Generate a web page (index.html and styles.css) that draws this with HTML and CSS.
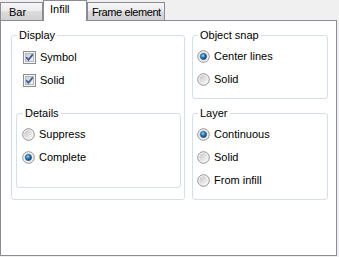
FILE: index.html
```html
<!DOCTYPE html>
<html lang="en">
<head>
    <meta charset="UTF-8">
    <meta name="viewport" content="width=device-width, initial-scale=1.0">
    <title>Infill</title>
    <link rel="stylesheet" href="styles.css">
</head>
<body>
    <!-- shared drawings for the check boxes and radio buttons -->
    <svg class="defs" width="0" height="0">
        <defs>
            <linearGradient id="boxFill" x1="0" y1="0" x2="1" y2="1">
                <stop offset="0" stop-color="#c9ccd2"/>
                <stop offset="1" stop-color="#f6f6f6"/>
            </linearGradient>
            <linearGradient id="radioFill" x1="0" y1="0" x2="1" y2="1">
                <stop offset="0" stop-color="#c6c6c6"/>
                <stop offset="1" stop-color="#fafafa"/>
            </linearGradient>
            <radialGradient id="dotFill" cx="0.4" cy="0.35" r="0.7">
                <stop offset="0" stop-color="#9fdcf8"/>
                <stop offset="0.5" stop-color="#1e76bb"/>
                <stop offset="1" stop-color="#0b3c6c"/>
            </radialGradient>
            <symbol id="checkbox" viewBox="0 0 13 13">
                <rect x="0.5" y="0.5" width="12" height="12" fill="#f4f4f4" stroke="#8e8f8f"/>
                <rect x="2.5" y="2.5" width="8" height="8" fill="url(#boxFill)" stroke="#b4b9bf"/>
                <path d="M3.2 6.3 L5.4 8.9 L9.8 3.4" fill="none" stroke="#42599a" stroke-width="1.7"/>
            </symbol>
            <symbol id="radio-off" viewBox="0 0 13 13">
                <circle cx="6.5" cy="6.5" r="5.8" fill="#f4f4f4" stroke="#939393"/>
                <circle cx="6.5" cy="6.5" r="4.2" fill="url(#radioFill)"/>
            </symbol>
            <symbol id="radio-on" viewBox="0 0 13 13">
                <circle cx="6.5" cy="6.5" r="5.8" fill="#f4f4f4" stroke="#939393"/>
                <circle cx="6.5" cy="6.5" r="4.2" fill="url(#radioFill)"/>
                <circle cx="6.5" cy="6.5" r="3.1" fill="url(#dotFill)" stroke="#24496f" stroke-width="0.6"/>
            </symbol>
        </defs>
    </svg>

    <div class="tabs">
        <div class="tab tab-bar">Bar</div>
        <div class="tab tab-infill selected">Infill</div>
        <div class="tab tab-frame">Frame element</div>
    </div>

    <div class="pane">
        <div class="column">
            <fieldset class="group display">
                <legend>Display</legend>
                <label class="option indent"><svg class="mark"><use href="#checkbox"/></svg>Symbol</label>
                <label class="option indent"><svg class="mark"><use href="#checkbox"/></svg>Solid</label>

                <fieldset class="group details">
                    <legend>Details</legend>
                    <label class="option"><svg class="mark"><use href="#radio-off"/></svg>Suppress</label>
                    <label class="option"><svg class="mark"><use href="#radio-on"/></svg>Complete</label>
                </fieldset>
            </fieldset>
        </div>

        <div class="column">
            <fieldset class="group snap">
                <legend>Object snap</legend>
                <label class="option"><svg class="mark"><use href="#radio-on"/></svg>Center lines</label>
                <label class="option"><svg class="mark"><use href="#radio-off"/></svg>Solid</label>
            </fieldset>

            <fieldset class="group layer">
                <legend>Layer</legend>
                <label class="option"><svg class="mark"><use href="#radio-on"/></svg>Continuous</label>
                <label class="option"><svg class="mark"><use href="#radio-off"/></svg>Solid</label>
                <label class="option"><svg class="mark"><use href="#radio-off"/></svg>From infill</label>
            </fieldset>
        </div>
    </div>
</body>
</html>
```

FILE: styles.css
```css
* {
    font-family: "Liberation Sans", Arial, sans-serif;
    box-sizing: border-box;
}

body {
    margin: 0;
    background-color: #f0f0f0;
    font-size: 11px;
    line-height: 13px;
    color: #000;
}

.defs {
    display: block;
    height: 0;
}

/* tab strip */
.tabs {
    display: flex;
    align-items: flex-end;
    height: 20px;
}

.tab {
    height: 18px;
    padding-top: 3px;
    border: 1px solid #898c95;
    border-bottom: none;
    background: linear-gradient(#f6f6f6, #ebebeb 50%, #dcdcdc 50%, #d0d0d0);
    white-space: nowrap;
    overflow: hidden;
}

.tab-bar {
    width: 43px;
    padding-left: 8px;
}

.tab-infill {
    width: 44px;
    padding-left: 6px;
}

.tab-frame {
    width: 78px;
    padding-left: 4px;
    letter-spacing: -0.4px;
}

.tab.selected {
    position: relative;
    z-index: 1;
    height: 21px;
    margin-bottom: -1px;
    padding-top: 2px;
    background: #fff;
}

/* page under the tabs */
.pane {
    display: grid;
    grid-template-columns: 174px 136px;
    column-gap: 7px;
    align-items: start;
    width: 337px;
    height: 236px;
    padding: 8px 0 0 10px;
    border: 1px solid #898c95;
    background-color: #fff;
}

.group {
    margin: 0;
    min-width: 0;
    border: 1px solid #d5dfe5;
    border-radius: 3px;
}

.group legend {
    margin-left: 1px;
    padding: 0 2px;
    line-height: 13px;
}

.display {
    padding: 4px 3px 11px 4px;
}

.details {
    margin-top: 15px;
    padding: 3px 4px 18px 5px;
}

.snap {
    padding: 3px 4px 7px 4px;
}

.layer {
    margin-top: 8px;
    padding: 3px 4px 7px 4px;
}

.option {
    display: flex;
    align-items: center;
    height: 23px;
}

.option.indent {
    padding-left: 7px;
}

.mark {
    width: 13px;
    height: 13px;
    margin-right: 4px;
    flex: none;
}
```
